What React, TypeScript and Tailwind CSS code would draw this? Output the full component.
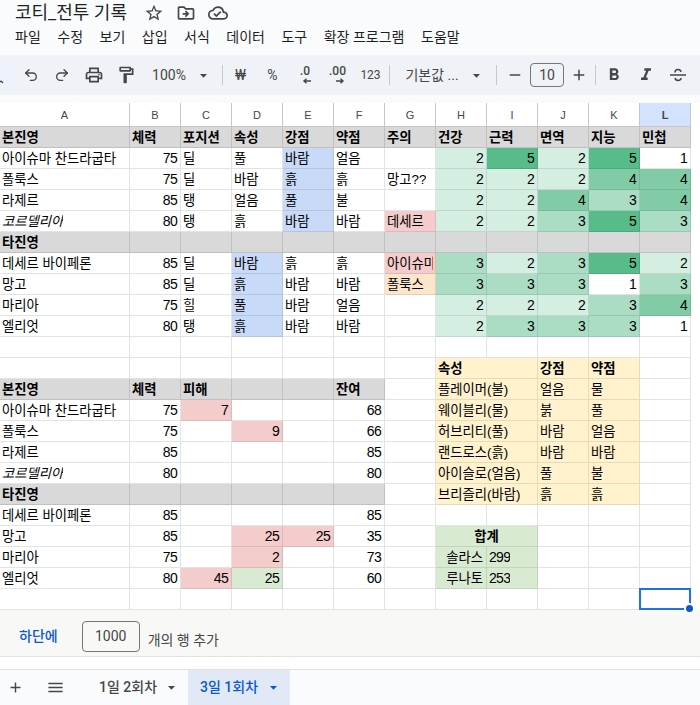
/** Spreadsheet view — battle log sheet with toolbar, cell grid and sheet tabs. */
import type { ReactNode } from 'react'
import { Redo2, Undo2 } from 'lucide-react'
import {
  MdArrowDropDown,
  MdFormatBold,
  MdFormatItalic,
  MdMenu,
  MdOutlineAdd,
  MdOutlineCloudDone,
  MdOutlineDriveFileMove,
  MdOutlineFormatPaint,
  MdOutlinePrint,
  MdOutlineStarBorder,
  MdRemove,
} from 'react-icons/md'

const fills = {
  none: 'bg-white border-[#e2e3e3]',
  gray: 'bg-[#d9d9d9] border-[#c0c0c0]',
  blue: 'bg-[#c9daf8] border-[#b5c4df]',
  red: 'bg-[#f4cccc] border-[#dcb8b8]',
  orange: 'bg-[#fce5cd] border-[#e3ceb8]',
  yellow: 'bg-[#fff2cc] border-[#e6dab8]',
  green: 'bg-[#d9ead3] border-[#c3d3be]',
  h2: 'bg-[#d5eee2] border-[#c0d6cb]',
  h3: 'bg-[#abddc4] border-[#9ac7b0]',
  h4: 'bg-[#81cca7] border-[#74b896]',
  h5: 'bg-[#57bb8a] border-[#4ea87c]',
}

type Fill = keyof typeof fills

interface Cell {
  t?: string
  fill?: Fill
  bold?: boolean
  italic?: boolean
  left?: boolean
  right?: boolean
  center?: boolean
  span?: number
  selected?: boolean
}

const g = (t = ''): Cell => ({ t, fill: 'gray', bold: true })
const b = (t: string): Cell => ({ t, fill: 'blue' })
const r = (t: string): Cell => ({ t, fill: 'red' })
const y = (t: string): Cell => ({ t, fill: 'yellow' })
const heat = (n: number): Cell => ({
  t: String(n),
  fill: n === 2 ? 'h2' : n === 3 ? 'h3' : n === 4 ? 'h4' : n === 5 ? 'h5' : 'none',
})
const heats = (...ns: number[]) => ns.map(heat)
const empty = (n: number): Cell[] => Array.from({ length: n }, () => ({}))
const grayRow = (n: number) => [g('타진영'), ...Array.from({ length: n }, () => g())]

const attrs = (name: string, strong: string, weak: string): Cell[] => [
  { t: name, fill: 'yellow', span: 2 },
  y(strong),
  y(weak),
]

const rows: Cell[][] = [
  ['본진영', '체력', '포지션', '속성', '강점', '약점', '주의', '건강', '근력', '면역', '지능', '민첩'].map((t) => g(t)),
  [{ t: '아이슈마 찬드라굽타' }, { t: '75' }, { t: '딜' }, { t: '풀' }, b('바람'), { t: '얼음' }, {}, ...heats(2, 5, 2, 5, 1)],
  [{ t: '폴룩스' }, { t: '75' }, { t: '딜' }, { t: '바람' }, b('흙'), { t: '흙' }, { t: '망고??' }, ...heats(2, 2, 2, 4, 4)],
  [{ t: '라제르' }, { t: '85' }, { t: '탱' }, { t: '얼음' }, b('풀'), { t: '불' }, {}, ...heats(2, 2, 4, 3, 4)],
  [{ t: '코르델리아', italic: true }, { t: '80' }, { t: '탱' }, { t: '흙' }, b('바람'), { t: '바람' }, r('데세르'), ...heats(2, 2, 3, 5, 3)],
  grayRow(11),
  [{ t: '데세르 바이페론' }, { t: '85' }, { t: '딜' }, b('바람'), { t: '흙' }, { t: '흙' }, r('아이슈마'), ...heats(3, 2, 3, 5, 2)],
  [{ t: '망고' }, { t: '85' }, { t: '딜' }, b('흙'), { t: '바람' }, { t: '바람' }, { t: '폴룩스', fill: 'orange' }, ...heats(3, 3, 3, 1, 3)],
  [{ t: '마리아' }, { t: '75' }, { t: '힐' }, b('풀'), { t: '바람' }, { t: '얼음' }, {}, ...heats(2, 2, 2, 3, 4)],
  [{ t: '엘리엇' }, { t: '80' }, { t: '탱' }, b('흙'), { t: '바람' }, { t: '바람' }, {}, ...heats(2, 3, 3, 3, 1)],
  empty(12),
  [
    ...empty(7),
    { t: '속성', fill: 'yellow', bold: true, span: 2 },
    { t: '강점', fill: 'yellow', bold: true },
    { t: '약점', fill: 'yellow', bold: true },
    {},
  ],
  [g('본진영'), g('체력'), g('피해'), g(), g(), g('잔여'), {}, ...attrs('플레이머(불)', '얼음', '물'), {}],
  [{ t: '아이슈마 찬드라굽타' }, { t: '75' }, r('7'), {}, {}, { t: '68' }, {}, ...attrs('웨이블리(물)', '붉', '풀'), {}],
  [{ t: '폴룩스' }, { t: '75' }, {}, r('9'), {}, { t: '66' }, {}, ...attrs('허브리티(풀)', '바람', '얼음'), {}],
  [{ t: '라제르' }, { t: '85' }, {}, {}, {}, { t: '85' }, {}, ...attrs('랜드로스(흙)', '바람', '바람'), {}],
  [{ t: '코르델리아', italic: true }, { t: '80' }, {}, {}, {}, { t: '80' }, {}, ...attrs('아이슬로(얼음)', '풀', '불'), {}],
  [...grayRow(5), {}, ...attrs('브리즐리(바람)', '흙', '흙'), {}],
  [{ t: '데세르 바이페론' }, { t: '85' }, {}, {}, {}, { t: '85' }, ...empty(6)],
  [
    { t: '망고' },
    { t: '85' },
    {},
    r('25'),
    r('25'),
    { t: '35' },
    {},
    { t: '합계', fill: 'green', bold: true, center: true, span: 2 },
    ...empty(3),
  ],
  [
    { t: '마리아' },
    { t: '75' },
    {},
    r('2'),
    {},
    { t: '73' },
    {},
    { t: '솔라스', fill: 'green', right: true },
    { t: '299', fill: 'green', left: true },
    ...empty(3),
  ],
  [
    { t: '엘리엇' },
    { t: '80' },
    r('45'),
    { t: '25', fill: 'green' },
    {},
    { t: '60' },
    {},
    { t: '루나토', fill: 'green', right: true },
    { t: '253', fill: 'green', left: true },
    ...empty(3),
  ],
  [...empty(11), { selected: true }],
]

const columns = ['A', 'B', 'C', 'D', 'E', 'F', 'G', 'H', 'I', 'J', 'K', 'L']

function SheetCell({ cell }: { cell: Cell }) {
  const digits = /^\d+$/.test(cell.t ?? '')
  const numeric = digits && !cell.left
  const align = cell.center ? 'justify-center' : numeric || cell.right ? 'justify-end' : 'justify-start'
  return (
    <div
      className={`relative flex items-end border-r border-b px-[2px] pb-[1px] leading-[17px] whitespace-nowrap text-black ${digits ? 'text-[14px] tracking-[-0.7px]' : 'text-[13.33px]'} ${align} ${fills[cell.fill ?? 'none']} ${cell.bold ? 'font-bold' : ''} ${cell.italic ? 'italic' : ''}`}
      style={cell.span ? { gridColumn: `span ${cell.span}` } : undefined}
    >
      <span className={`block overflow-hidden ${numeric || cell.right ? 'pr-[1px]' : ''}`}>{cell.t}</span>
      {cell.selected && (
        <div className="absolute -top-px -right-px -bottom-px -left-px border-2 border-[#1a73e8]">
          <div className="absolute -right-[6px] -bottom-[6px] h-[11px] w-[11px] rounded-full border-2 border-white bg-[#0b57d0]" />
        </div>
      )}
    </div>
  )
}

function ToolButton({ w, children }: { w: string; children: ReactNode }) {
  return <div className={`flex h-full shrink-0 items-center justify-center text-[#444746] ${w}`}>{children}</div>
}

function Divider() {
  return <div className="mx-[2px] h-[20px] w-px shrink-0 bg-[#c7c7c7]" />
}

function DecimalIcon({ label, dir }: { label: string; dir: 'left' | 'right' }) {
  return (
    <div className="relative flex h-[24px] w-[24px] items-start justify-center text-[12px] leading-[16px] font-medium text-[#444746]">
      <span>{label}</span>
      <svg viewBox="0 0 10 6" className="absolute top-[15px] left-[9px] h-[6px] w-[10px]">
        <path
          d={dir === 'left' ? 'M9 3H2M4.5 .8 2 3l2.5 2.2' : 'M1 3h7M5.5 .8 8 3 5.5 5.2'}
          fill="none"
          stroke="currentColor"
          strokeWidth="1.4"
        />
      </svg>
    </div>
  )
}

function StrikeIcon() {
  return (
    <svg viewBox="0 0 18 16" className="h-[16px] w-[18px]" fill="none" stroke="currentColor" strokeWidth="1.5">
      <path d="M1 8h16" />
      <path d="M6 5.6C6 3.4 7.4 2.6 9 2.6s2.7.7 3 2.2" />
      <path d="M6 11c.3 1.6 1.4 2.4 3 2.4s3-.8 3-2.4" />
    </svg>
  )
}

export default function App() {
  const ui = "font-['Roboto','Noto_Sans_CJK_KR',sans-serif]"
  return (
    <div className={`flex h-[705px] w-[700px] flex-col overflow-hidden bg-[#f9fbfd] ${ui}`}>
      <div className="flex h-[26px] shrink-0 items-center pl-[15px]">
        <span className="w-[129px] text-[18px] leading-[24px] text-[#1f1f1f]">코티_전투 기록</span>
        <div className="flex items-center gap-[12px] text-[#444746]">
          <MdOutlineStarBorder size={20} />
          <MdOutlineDriveFileMove size={20} />
          <MdOutlineCloudDone size={20} />
        </div>
      </div>

      <div className="flex h-[29px] shrink-0 items-start gap-[16.5px] pt-[1px] pl-[15px] text-[14px] leading-[20px] text-[#1f1f1f]">
        {['파일', '수정', '보기', '삽입', '서식', '데이터', '도구', '확장 프로그램', '도움말'].map((m) => (
          <span key={m}>{m}</span>
        ))}
      </div>

      <div className="flex h-[40px] shrink-0 items-center bg-[#eff2f7]">
        <div className="flex h-[26px] w-[15px] shrink-0 items-end bg-[#edf2fb] pb-[4px]">
          <svg viewBox="0 0 4 4" className="h-[4px] w-[4px] text-[#444746]">
            <path d="M-1 3 1 1 3 3" fill="none" stroke="currentColor" strokeWidth="1.2" />
          </svg>
        </div>
        <ToolButton w="w-[31px]"><Undo2 size={16} strokeWidth={2} /></ToolButton>
        <ToolButton w="w-[32px]"><Redo2 size={16} strokeWidth={2} /></ToolButton>
        <ToolButton w="w-[32px]"><MdOutlinePrint size={20} /></ToolButton>
        <ToolButton w="w-[31px]"><MdOutlineFormatPaint size={20} /></ToolButton>
        <ToolButton w="w-[79px]">
          <span className="ml-[3px] text-[14px]">100%</span>
          <MdArrowDropDown size={17} className="ml-[9px]" />
        </ToolButton>
        <Divider />
        <ToolButton w="w-[31px]"><span className="text-[15px]">₩</span></ToolButton>
        <ToolButton w="w-[33px]"><span className="text-[14px]">%</span></ToolButton>
        <ToolButton w="w-[32px]"><DecimalIcon label=".0" dir="left" /></ToolButton>
        <ToolButton w="w-[33px]"><DecimalIcon label=".00" dir="right" /></ToolButton>
        <ToolButton w="w-[33px]"><span className="text-[12px]">123</span></ToolButton>
        <Divider />
        <ToolButton w="w-[102px]">
          <span className="ml-[4px] text-[14px]">기본값 ...</span>
          <MdArrowDropDown size={17} className="ml-[9px]" />
        </ToolButton>
        <Divider />
        <ToolButton w="w-[31px]"><MdRemove size={18} /></ToolButton>
        <div className="flex h-[24px] w-[34px] shrink-0 items-center justify-center rounded-[4px] border border-[#747775] text-[14px] text-[#444746]">
          10
        </div>
        <ToolButton w="w-[29px]"><MdOutlineAdd size={18} /></ToolButton>
        <Divider />
        <ToolButton w="w-[32px]"><MdFormatBold size={20} /></ToolButton>
        <ToolButton w="w-[31px]"><MdFormatItalic size={20} /></ToolButton>
        <ToolButton w="w-[33px]"><StrikeIcon /></ToolButton>
      </div>

      <div className="h-[8px] shrink-0" />

      <div className="shrink-0 bg-white font-['Liberation_Sans','Noto_Sans_CJK_KR',sans-serif]">
        <div className="grid h-[24px] grid-cols-[130px_repeat(11,51px)_9px]">
          {columns.map((c) => (
            <div
              key={c}
              className={`flex items-center justify-center border-r border-b border-[#c7c7c7] pt-[1px] text-[11px] text-[#444746] ${c === 'L' ? 'bg-[#d3e3fd] font-bold text-[#0b57d0]' : 'bg-white'}`}
            >
              {c}
            </div>
          ))}
        </div>
        {rows.map((row, i) => (
          <div key={i} className="grid h-[21px] grid-cols-[130px_repeat(11,51px)_9px]">
            {row.map((cell, j) => (
              <SheetCell key={j} cell={cell} />
            ))}
          </div>
        ))}
      </div>

      <div className="flex h-[47px] shrink-0 border-b border-[#e1e3e1] bg-[#f8f9f7]">
        <span className="mt-[16px] ml-[19px] text-[14px] leading-[20px] font-medium text-[#0b57d0]">하단에</span>
        <div className="mt-[11px] ml-[24px] flex h-[31px] w-[58px] items-center justify-center rounded-[4px] border border-[#747775] text-[14px] text-[#444746]">
          1000
        </div>
        <span className="mt-[20px] ml-[8px] text-[14px] leading-[20px] text-[#444746]">개의 행 추가</span>
      </div>

      <div className="h-[12px] shrink-0 bg-white" />

      <div className="flex h-[36px] shrink-0 items-center border-t border-[#e1e3e1]">
        <div className="flex w-[30px] justify-center text-[#444746]"><MdOutlineAdd size={17} /></div>
        <div className="ml-[15px] flex w-[20px] justify-center text-[#444746]"><MdMenu size={19} /></div>
        <div className="ml-[34px] flex h-full w-[87px] items-center text-[14px] font-medium text-[#444746]">
          <span>1일 2회차</span>
          <MdArrowDropDown size={17} className="ml-[6px]" />
        </div>
        <div className="ml-[2px] flex h-full w-[102px] items-center bg-[#e1e9f7] pl-[12px] text-[14px] font-medium text-[#0b57d0]">
          <span>3일 1회차</span>
          <MdArrowDropDown size={17} className="ml-[7px]" />
        </div>
      </div>
    </div>
  )
}
